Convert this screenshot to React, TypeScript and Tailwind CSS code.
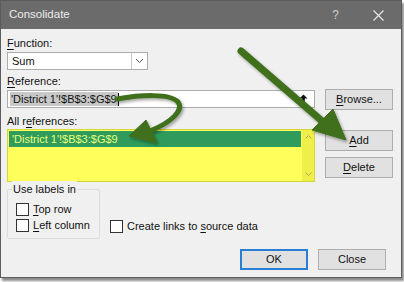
import { FC, ReactNode } from 'react'

const font = { fontFamily: '"Liberation Sans", Arial, sans-serif' }

const U: FC<{ children: ReactNode }> = ({ children }) => <span className="underline underline-offset-2">{children}</span>

const Btn: FC<{ children: ReactNode; primary?: boolean }> = ({ children, primary }) => (
    <div
        className={`flex h-[21px] w-[68px] items-center justify-center bg-[#e1e1e1] text-[11px] text-[#111] ${
            primary ? 'border-2 border-[#2a7fd4]' : 'border border-[#adadad]'
        }`}
    >
        {children}
    </div>
)

const Check: FC<{ children: ReactNode }> = ({ children }) => (
    <div className="flex h-[16px] items-center gap-[4px] whitespace-nowrap">
        <div className="h-[13px] w-[13px] shrink-0 border border-[#333] bg-white" />
        <span>{children}</span>
    </div>
)

const Arrows: FC = () => (
    <svg className="pointer-events-none absolute left-0 top-0" width="404" height="282" viewBox="0 0 404 282">
        <defs>
            <filter id="sh" x="-20%" y="-20%" width="140%" height="140%">
                <feDropShadow dx="1.5" dy="2" stdDeviation="1.5" floodColor="#000" floodOpacity="0.35" />
            </filter>
        </defs>
        <g filter="url(#sh)" fill="#3f6f1e" stroke="#3f6f1e">
            {/* curved arrow */}
            <path d="M117 99 C 140 95, 170 93, 178 102 C 184 110, 172 122, 150 131" fill="none" strokeWidth="5" strokeLinecap="round" />
            <path d="M129 136 L146 120 L157 143 Z" strokeWidth="1" strokeLinejoin="round" />
            {/* straight arrow */}
            <path d="M241 51 L322 121" fill="none" strokeWidth="7" strokeLinecap="round" />
            <path d="M346 140 L312 130 L333 109 Z" strokeWidth="1" strokeLinejoin="round" />
        </g>
    </svg>
)

export default function App() {
    return (
        <div className="relative h-[282px] w-[404px] bg-white text-[11px] text-[#111]" style={font}>
            <div className="flex h-[278px] w-[402px] flex-col border border-[#5c5c5c] bg-[#f0f0f0] shadow-[2px_3px_2px_rgba(0,0,0,0.45)]">
                {/* title bar */}
                <div className="flex h-[28px] shrink-0 items-center bg-[#6b6b6b] pl-[8px] text-[#ececec]">
                    <span className="text-[11.5px]">Consolidate</span>
                    <span className="ml-auto mr-[34px] text-[12px] text-[#d0d0d0]">?</span>
                    <svg width="11" height="11" viewBox="0 0 11 11" className="mr-[17px]">
                        <path d="M0.5 0.5 L10.5 10.5 M10.5 0.5 L0.5 10.5" stroke="#e6e6e6" strokeWidth="1.2" />
                    </svg>
                </div>

                {/* body */}
                <div className="flex flex-1 flex-col px-[6px] pt-[6px]">
                    <div className="h-[16px] leading-[16px]">
                        <U>F</U>unction:
                    </div>
                    <div className="mt-[1px] flex h-[18px] w-[141px] border border-[#acacac] bg-white">
                        <span className="flex-1 pl-[4px] leading-[16px]">Sum</span>
                        <div className="flex w-[16px] items-center justify-center border-l border-[#c8c8c8]">
                            <svg width="9" height="6" viewBox="0 0 9 6">
                                <path d="M1 1 L4.5 4.5 L8 1" stroke="#555" fill="none" strokeWidth="1" />
                            </svg>
                        </div>
                    </div>

                    <div className="mt-[3px] h-[16px] leading-[16px]">
                        <U>R</U>eference:
                    </div>
                    <div className="flex items-start gap-[10px]">
                        <div className="mt-[1px] flex h-[18px] w-[308px] items-center border border-[#acacac] bg-white pl-[2px]">
                            <span className="bg-[#c8c8c8] px-[1px] leading-[14px]">'District 1'!$B$3:$G$9</span>
                            <span className="h-[13px] w-[1px] bg-black" />
                            <svg width="9" height="10" viewBox="0 0 9 10" className="ml-auto mr-[6px]">
                                <path d="M4.5 0.5 L8.5 4.5 L5.8 4.5 L5.8 9.5 L3.2 9.5 L3.2 4.5 L0.5 4.5 Z" fill="#111" />
                            </svg>
                        </div>
                        <Btn>
                            <U>B</U>rowse...
                        </Btn>
                    </div>

                    <div className="mt-[3px] h-[16px] leading-[16px]">
                        All r<U>e</U>ferences:
                    </div>
                    <div className="flex items-start gap-[10px]">
                        <div className="flex h-[53px] w-[308px] border border-[#d6d63a] bg-[#ffff5c]">
                            <div className="flex-1 p-[1px]">
                                <div className="h-[16px] bg-[#2f9c5c] pl-[3px] leading-[16px] text-[#e8ff7a]">'District 1'!$B$3:$G$9</div>
                            </div>
                            <div className="flex w-[12px] flex-col items-center justify-between bg-[#efef4a] py-[5px]">
                                <svg width="7" height="4" viewBox="0 0 7 4">
                                    <path d="M0.5 3.5 L3.5 0.5 L6.5 3.5" stroke="#a8a86a" fill="none" />
                                </svg>
                                <svg width="7" height="4" viewBox="0 0 7 4">
                                    <path d="M0.5 0.5 L3.5 3.5 L6.5 0.5" stroke="#a8a86a" fill="none" />
                                </svg>
                            </div>
                        </div>
                        <div className="flex flex-col gap-[6px] pt-[1px]">
                            <Btn>
                                <U>A</U>dd
                            </Btn>
                            <Btn>
                                <U>D</U>elete
                            </Btn>
                        </div>
                    </div>

                    <div className="mt-[7px] flex items-end gap-[10px]">
                        <div className="relative flex h-[50px] w-[93px] flex-col justify-end rounded-[2px] border border-[#dcdcdc] pb-[5px] pl-[8px]">
                            <span className="absolute left-[4px] top-[-9px] bg-[#f0f0f0] px-[1px] leading-[16px]">Use labels in</span>
                            <Check>
                                <U>T</U>op row
                            </Check>
                            <Check>
                                <U>L</U>eft column
                            </Check>
                        </div>
                        <div className="mb-[5px]">
                            <Check>
                                Create links to <U>s</U>ource data
                            </Check>
                        </div>
                    </div>

                    <div className="mt-[10px] flex justify-end gap-[10px] pr-[9px]">
                        <Btn primary>OK</Btn>
                        <Btn>Close</Btn>
                    </div>
                </div>
            </div>
            <Arrows />
        </div>
    )
}
